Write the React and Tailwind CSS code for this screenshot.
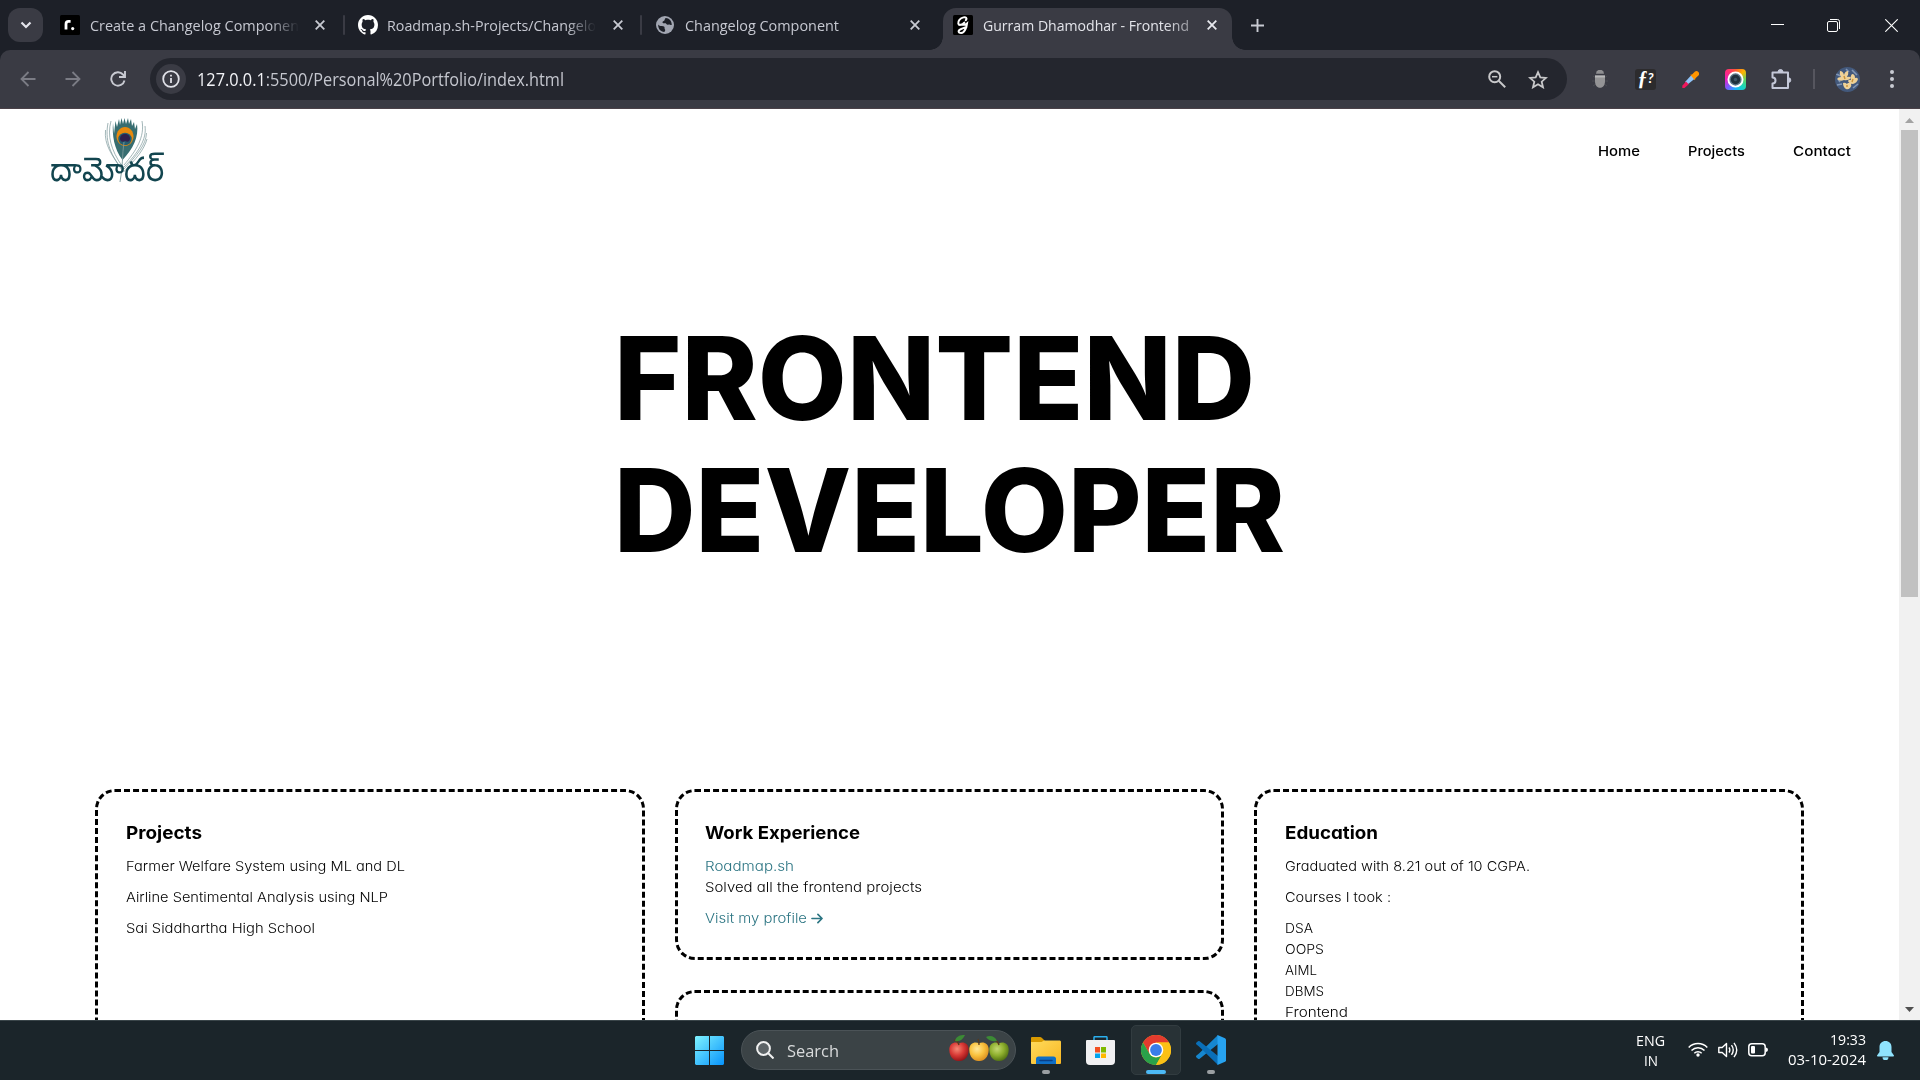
import React, { useLayoutEffect, useRef, useState } from "react";

/* Text stretched horizontally to an exact width, measured once mounted. */
function Fit({ w, className = "", children }) {
  const ref = useRef(null);
  const [scale, setScale] = useState(1);
  useLayoutEffect(() => {
    const natural = ref.current.offsetWidth;
    if (natural) setScale(w / ref.current.getBoundingClientRect().width);
  }, [w]);
  return (
    <span className={`block overflow-visible whitespace-nowrap ${className}`} style={{ width: w }}>
      <span ref={ref} className="inline-block origin-left" style={{ transform: scale === 1 ? undefined : `scaleX(${scale})` }}>
        {children}
      </span>
    </span>
  );
}

const Close = ({ className = "text-[#c8cad2]" }) => (
  <svg viewBox="0 0 10 10" className={`size-[10px] shrink-0 ${className}`} fill="none" stroke="currentColor" strokeWidth="1.8">
    <path d="M.7.7l8.6 8.6M9.3.7L.7 9.3" />
  </svg>
);

const fade = "[mask-image:linear-gradient(to_right,#000_86%,transparent_100%)]";

function TabStrip() {
  return (
    <div className="flex h-[50px] items-start bg-[#1d2028] text-[15px] text-[#c6c8d1] font-['Open_Sans','Noto_Sans',sans-serif]">
      <div className="ml-2 mt-2 flex h-[34px] w-[35px] shrink-0 items-center justify-center rounded-[12px] bg-[#3a3b44]">
        <svg viewBox="0 0 12 8" className="h-[8px] w-[12px]" fill="none" stroke="#e4e5ec" strokeWidth="2.2"><path d="M1.5 1.5L6 6l4.500-4.500" /></svg>
      </div>
      <div className="flex h-[50px] w-[302px] shrink-0 items-center pl-[17px]">
        <svg viewBox="0 0 20 20" className="size-5 shrink-0">
          <rect width="20" height="20" rx="1.5" fill="#000" />
          <path d="M6 14.5V9.2Q6 6.4 8.6 6.4H10.6" fill="none" stroke="#fff" strokeWidth="2.8" />
          <circle cx="12.7" cy="13.6" r="1.6" fill="#fff" />
        </svg>
        <Fit w={209} className={`ml-[10px] ${fade}`}>Create a Changelog Componen</Fit>
        <Close className="ml-[16px] text-[#c8cad2]" />
        <span className="ml-auto h-5 w-[2px] rounded bg-[#3a3b44]" />
      </div>
      <div className="flex h-[50px] w-[297px] shrink-0 items-center pl-[13px]">
        <svg viewBox="0 0 16 16" className="size-5 shrink-0" fill="#fff">
          <path d="M8 0C3.58 0 0 3.58 0 8c0 3.54 2.29 6.53 5.47 7.59.4.07.55-.17.55-.38 0-.19-.01-.82-.01-1.49-2.01.37-2.53-.49-2.69-.94-.09-.23-.48-.94-.82-1.13-.28-.15-.68-.52-.01-.53.63-.01 1.08.58 1.23.82.72 1.21 1.87.87 2.33.66.07-.52.28-.87.51-1.07-1.78-.2-3.64-.89-3.64-3.95 0-.87.31-1.59.82-2.15-.08-.2-.36-1.02.08-2.12 0 0 .67-.21 2.2.82.64-.18 1.32-.27 2-.27s1.36.09 2 .27c1.53-1.04 2.2-.82 2.2-.82.44 1.1.16 1.92.08 2.12.51.56.82 1.27.82 2.15 0 3.07-1.87 3.75-3.65 3.95.29.25.54.73.54 1.48 0 1.07-.01 1.93-.01 2.2 0 .21.15.46.55.38A8.01 8.01 0 0016 8c0-4.42-3.58-8-8-8z" />
        </svg>
        <Fit w={209} className={`ml-[9px] ${fade}`}>Roadmap.sh-Projects/Changelo</Fit>
        <Close className="ml-[17px] text-[#c8cad2]" />
        <span className="ml-auto h-5 w-[2px] rounded bg-[#3a3b44]" />
      </div>
      <div className="flex h-[50px] w-[301px] shrink-0 items-center pl-[14px]">
        <svg viewBox="0 0 20 20" className="size-[18px] shrink-0">
          <circle cx="10" cy="10" r="10" fill="#a2a6b2" />
          <path d="M2.500 9.500C3.500 11.500 6 11 8 11.500c2.500.5 1 2.500 2 3.500.8.800-.3 2-.8 2.800C5 17.500 2 14 2.500 9.500zM11 2.300C9 3 10.500 5 8.500 5.600 7 6 6.800 7.500 8 8c1.500.6 2.500-.6 3.300.5.6 1 1.500 1.500 2.700 1 1.200-.4 1.700.8 3.500.6C17.700 5.500 14.500 2.500 11 2.300z" fill="#1d2028" />
        </svg>
        <Fit w={154} className="ml-[11px]">Changelog Component</Fit>
        <Close className="ml-[71px] text-[#c8cad2]" />
      </div>
      <div className="relative mt-2 flex h-[42px] w-[289px] shrink-0 items-center rounded-t-[13px] bg-[#3a3b44] pb-2 pl-[10px] text-[#e3e4ea]">
        <span className="absolute bottom-0 -left-[13px] size-[13px] bg-[radial-gradient(circle_at_0_0,transparent_12.500px,#3a3b44_13px)]" />
        <span className="absolute bottom-0 -right-[13px] size-[13px] bg-[radial-gradient(circle_at_100%_0,transparent_12.500px,#3a3b44_13px)]" />
        <svg viewBox="0 0 20 20" className="size-5 shrink-0">
          <rect width="20" height="20" rx="1.500" fill="#000" />
          <path d="M12.800 5.200C14.500 3.500 13 1.800 10.500 2.400 7 3.200 4.800 6 5.300 8.500c.5 2.300 4 1.500 6-1M8.500 9.500c2 .6 4 .3 5.500-1C13.500 12 12.500 15 10.500 17c-2 1.800-5.500 1-4.800-1.200C6.500 14 10 13.500 13.500 12" fill="none" stroke="#fff" strokeWidth="2" strokeLinecap="round" />
        </svg>
        <Fit w={206} className="ml-[10px] [mask-image:linear-gradient(to_right,#000_88%,#0008_100%)]">Gurram Dhamodhar - Frontend</Fit>
        <Close className="ml-[18px] text-[#e8e9ef]" />
      </div>
      <div className="flex h-[50px] flex-1 items-center">
        <svg viewBox="0 0 13 13" className="ml-[19px] mt-[0px] size-[13px]" stroke="#c8cad2" strokeWidth="1.900"><path d="M6.500 0v13M0 6.500h13" /></svg>
        <svg viewBox="0 0 13 13" className="ml-auto size-[13px]" stroke="#fff" strokeWidth="1"><path d="M0 5.500h13" /></svg>
        <svg viewBox="0 0 13 13" className="ml-[43px] size-[13px]" fill="none" stroke="#fff" strokeWidth="1">
          <rect x=".5" y="2.500" width="10" height="10" rx="1.500" /><path d="M3 .5h7.500q2 0 2 2V10" />
        </svg>
        <svg viewBox="0 0 13 13" className="ml-[45px] mr-[22px] size-[13px]" stroke="#fff" strokeWidth="1.100"><path d="M.3.3l12.400 12.400M12.700.3L.3 12.700" /></svg>
      </div>
    </div>
  );
}

const Slot = ({ className, children }) => <div className={`flex shrink-0 items-center justify-center ${className}`}>{children}</div>;

function Toolbar() {
  return (
    <div className="bg-[#1d2028]">
      <div className="flex h-[59px] items-center rounded-t-[10px] border-b border-[#4a4148] bg-[#3a3b44] font-['Open_Sans','Noto_Sans',sans-serif]">
        <Slot className="ml-[5px] w-[45px]">
          <svg viewBox="0 0 16 16" className="size-4" fill="none" stroke="#7b7c85" strokeWidth="1.800"><path d="M15.500 8H1.500M8.500 1L1.500 8l7 7" /></svg>
        </Slot>
        <Slot className="w-[45px]">
          <svg viewBox="0 0 16 16" className="size-4" fill="none" stroke="#7b7c85" strokeWidth="1.800"><path d="M.5 8h14M7.500 1l7 7-7 7" /></svg>
        </Slot>
        <Slot className="w-[45px]">
          <svg viewBox="0 0 16 16" className="size-4" fill="none" stroke="#c8cad2" strokeWidth="1.900"><path d="M14.500 9.500A6.700 6.700 0 1 1 13 3.500L14.500 5" /><path d="M15 0v6H9" /></svg>
        </Slot>
        <div className="ml-[10px] flex h-[42px] w-[1417px] shrink-0 items-center rounded-full bg-[#24262e]">
          <span className="ml-[6px] flex size-[30px] items-center justify-center rounded-full bg-[#3a3b44]">
            <svg viewBox="0 0 18 18" className="size-[18px]" fill="none" stroke="#e0e1e8" strokeWidth="1.800"><circle cx="9" cy="9" r="7.800" /><path d="M9 8v5M9 4.700v1.900" /></svg>
          </span>
          <Fit w={367} className="ml-[11px] text-[17.500px] text-[#c4c6ce]"><span className="text-[#f2f3f7]">127.0.0.1</span>:5500/Personal%20Portfolio/index.html</Fit>
          <svg viewBox="0 0 18 18" className="ml-auto size-[18px]" fill="none" stroke="#c8c8ca" strokeWidth="2"><circle cx="6.700" cy="6.700" r="5.500" /><path d="M10.700 10.700l6.500 6.500" /><path d="M4 6.700h5.400" strokeWidth="1.500" /></svg>
          <svg viewBox="0 0 20 19" className="ml-[22px] mr-[19px] h-[19px] w-[20px]" fill="none" stroke="#c8c8ca" strokeWidth="1.800"><path d="M10 2.200l2.300 5.200 5.700.5-4.300 3.800 1.300 5.600-5-3-5 3 1.300-5.600L2 7.900l5.700-.5z" /></svg>
        </div>
        <div className="ml-[10px] flex items-center">
          <Slot className="w-[46px]">
            <svg viewBox="0 0 16 18" className="h-[18px] w-4">
              <path d="M1 6l3 2M0 11h4M1 16l3-2M15 6l-3 2M16 11h-4M15 16l-3-2" stroke="#4b4c53" />
              <path d="M4 3.800a4 4 0 0 1 8 0z" fill="#8f8f92" /><path d="M3 5.500h10V11c0 4-2 6.800-5 6.800S3 15 3 11z" fill="#949496" /><path d="M3 5.500h10v2H3z" fill="#b7b7b9" />
            </svg>
          </Slot>
          <Slot className="w-[45px]">
            <span className="flex size-[21px] items-center justify-center rounded-[3px] bg-[#2c2b2d] pb-[3px] font-['Liberation_Serif',serif] text-[20px] leading-none font-bold text-white italic">ƒ<span className="font-['Lato',sans-serif] text-[14px]">?</span></span>
          </Slot>
          <Slot className="w-[45px]">
            <svg viewBox="0 0 17 17" className="size-[17px]">
              <path d="M9.500 4l3.500 3.500-7.500 6L3 11z" fill="#90c4f8" /><path d="M4 10.500l2.700 2.700L2.500 17H.3v-2.200z" fill="#f0165c" />
              <path d="M8.200 3.800L10 3.500 13 .4q2-.9 3.400.6t.3 3.200l-3.200 3-.6 2z" fill="#ff9500" />
            </svg>
          </Slot>
          <Slot className="w-[45px]">
            <span className="flex size-[21px] items-center justify-center rounded-[4px] bg-[conic-gradient(from_0deg,#ff5a36,#ffb300,#5fd35c,#18d6c0,#18b4ff,#7a5cff,#e91ec0,#ff2d78,#ff5a36)]">
              <svg viewBox="0 0 18 18" className="size-[17px]"><circle cx="9" cy="9" r="7.500" fill="#5b7486" stroke="#fff" strokeWidth="2" /><circle cx="9" cy="9" r="5" fill="#1f313d" /><circle cx="9" cy="9" r="1.800" fill="#3c5364" /></svg>
            </span>
          </Slot>
          <Slot className="w-[45px] pl-[2px]">
            <svg viewBox="0 0 21 21" className="size-[21px]" fill="none" stroke="#c4c8d8" strokeWidth="2">
              <path d="M1.500 3.500H17v15.500H1.500v-4.500a3 3 0 0 0 0-6z" strokeLinejoin="round" /><path d="M7 3a2.500 2.500 0 0 1 5 0zM17.500 8.800a2.300 2.300 0 0 1 0 4.600z" fill="#c4c8d8" strokeWidth="1" />
            </svg>
          </Slot>
          <Slot className="w-[22px]"><span className="h-5 w-[2px] bg-[#56565f]" /></Slot>
          <Slot className="w-[45px]">
            <svg viewBox="0 0 25 25" className="size-[25px] rounded-full">
              <rect width="25" height="25" fill="#43597c" />
              <path d="M1 7l5 2M17 3l5 5M2 18l5-1M18 21l5-4M3 12l2 3M11 2l3 3" stroke="#8296b4" strokeWidth="1.600" />
              <path d="M5 4q3 0 4 4 1-4 4-4 1 3-1 6 3-1 4 1-3 3-7 2-4 2-7-1 1-2 4-2-2-3-1-6zM17 7q3 0 3 4 2-1 3 1-1 4-5 5-4 0-5-3 1-2 3-1-1-4 1-6zM8 16q2-1 4 1 1-2 4-1 1 3-1 5-2 2-4 1-3-2-3-6z" fill="#efd297" />
              <path d="M9 9l1 3M18 12l-1 3M12 18v2" stroke="#c99238" strokeWidth="1.400" />
            </svg>
          </Slot>
          <Slot className="w-[44px]">
            <svg viewBox="0 0 4 18" className="h-[18px] w-1" fill="#c8cad2"><circle cx="2" cy="2" r="2" /><circle cx="2" cy="9" r="2" /><circle cx="2" cy="16" r="2" /></svg>
          </Slot>
        </div>
      </div>
    </div>
  );
}

function Feather() {
  return (
    <svg viewBox="0 0 44 66" className="absolute top-0 left-[54px] h-[66px] w-[44px]" fill="none">
      <path d="M4 6C1 22 5 36 18 52M1.500 13C0 28 8 38 18.500 54M7 4C3 19 7 33 18 49M38 4C41 20 32 34 20 48M41 9C43 22 34 36 20 50M42.500 16C42 28 33 38 20 52M43 22C40 33 32 42 19.500 55" stroke="#7a979a" strokeWidth=".7" />
      <path d="M9 6l1 11 1.500-13 1.500 6 2-8 1 6 1.500-7 1.500 6 1.500-6 1.500 6 2-6 1 6 2-5 1 7 2-4 1 7 2-5C35 20 29 32 18.500 43 10 32 8 18 9 6z" fill="#376d70" />
      <path d="M21 10c5 0 8.500 4.500 8.500 9.500s-4 9.500-8.500 9.500-8.500-4.500-8.500-9.500 3.500-9.500 8.500-9.500z" fill="#e8890d" />
      <ellipse cx="21" cy="22" rx="6.700" ry="6.200" fill="#245d70" /><path d="M21 17c3 0 5 2 5 4.500S24 26 21 24c-3 2-5 0-5-2.500s2-4.500 5-4.500z" fill="#30204d" />
      <path d="M20 25C18 38 19 50 16 65" stroke="#7a979a" strokeWidth=".9" />
    </svg>
  );
}

function Card({ title, w, className = "", children }) {
  return (
    <section className={`rounded-[20px] border-[3px] border-dashed border-black px-[27.500px] pt-[27px] ${className}`}>
      {title && <h2 className="mb-[10px] text-[17.500px] leading-[27px] font-[650]"><Fit w={w}>{title}</Fit></h2>}
      {children}
    </section>
  );
}

const poppinsLike = "font-['Inter','Open_Sans',sans-serif] [font-feature-settings:'cv11']";

function Page() {
  return (
    <div className="flex h-[911px] overflow-hidden bg-white">
      <main className={`h-[911px] w-[1899px] overflow-hidden text-black ${poppinsLike}`}>
        <header className="flex h-[84px] items-center justify-between pr-[48px] pl-[50px]">
          <div className="relative h-[68px] w-[116px]">
            <Feather />
            <Fit w={114} className="relative pt-[32px] text-[34px] leading-[40px] font-light text-[#12454f]">దామోదర్</Fit>
          </div>
          <nav className="flex gap-[48px] text-[13.500px] leading-5 font-medium">
            <Fit w={42}>Home</Fit>
            <Fit w={57}>Projects</Fit>
            <Fit w={58}>Contact</Fit>
          </nav>
        </header>
        <h1 className="mt-[119px] ml-[614px] text-[115.500px] leading-[132px] font-[760]">
          <Fit w={641}>FRONTEND</Fit>
          <Fit w={671}>DEVELOPER</Fit>
        </h1>
        <div className="mt-[213px] ml-[95px] grid w-[1709px] grid-cols-3 gap-[30px] text-[13.500px] leading-[21px] font-[360]">
          <Card title="Projects" w={76} className="row-span-2 h-[400px]">
            <div className="flex flex-col gap-[10px]">
              <Fit w={279}>Farmer Welfare System using ML and DL</Fit>
              <Fit w={262}>Airline Sentimental Analysis using NLP</Fit>
              <Fit w={189}>Sai Siddhartha High School</Fit>
            </div>
          </Card>
          <Card title="Work Experience" w={155} className="h-[171px]">
            <Fit w={89} className="text-[#2c7583]">Roadmap.sh</Fit>
            <Fit w={217}>Solved all the frontend projects</Fit>
            <div className="mt-[10px] flex items-center text-[#2c7583]">
              <Fit w={102}>Visit my profile</Fit>
              <svg viewBox="0 0 13 12" className="ml-[4px] h-[11px] w-[12px]" fill="none" stroke="currentColor" strokeWidth="1.800" strokeLinecap="round" strokeLinejoin="round"><path d="M1 6h11M7.500 1.500L12 6l-4.500 4.500" /></svg>
            </div>
          </Card>
          <Card title="Education" w={93} className="row-span-2 h-[400px]">
            <div className="flex flex-col gap-[10px]">
              <Fit w={245}>Graduated with 8.21 out of 10 CGPA.</Fit>
              <Fit w={106}>Courses I took :</Fit>
              <div>
                <Fit w={28}>DSA</Fit>
                <Fit w={39}>OOPS</Fit>
                <Fit w={32}>AIML</Fit>
                <Fit w={39}>DBMS</Fit>
                <Fit w={63}>Frontend</Fit>
              </div>
            </div>
          </Card>
          <Card className="h-[199px]" />
        </div>
      </main>
      <aside className="flex h-[911px] w-[21px] flex-col items-center bg-[#f1f1f1]">
        <svg viewBox="0 0 9 5" className="mt-[9px] h-[5px] w-[9px]" fill="#a3a3a3"><path d="M0 5L4.500 0 9 5z" /></svg>
        <div className="mt-[7px] h-[467px] w-[17px] bg-[#c1c1c1]" />
        <svg viewBox="0 0 9 5" className="mt-auto mb-[8px] h-[5px] w-[9px]" fill="#505050"><path d="M0 0L4.500 5 9 0z" /></svg>
      </aside>
    </div>
  );
}

const Apple = ({ id, hi, mid, lo, leaf }) => (
  <svg viewBox="0 0 20 28" className="h-[28px] w-[20px] overflow-visible">
    <defs><radialGradient id={id} cx=".4" cy=".35" r=".7"><stop offset="0" stopColor={hi} /><stop offset=".5" stopColor={mid} /><stop offset="1" stopColor={lo} /></radialGradient></defs>
    <path d="M10 8.500C13 6 20 7.500 19.700 15 19.500 22 15 26.500 10 26 5 26.500.5 22 .3 15 0 7.500 7 6 10 8.500z" fill={`url(#${id})`} />
    <path d={leaf ? "M10 10Q9 6 5 5" : "M10 10Q10 6 9 4"} stroke="#5b3a1c" strokeWidth="1.300" fill="none" />
    {leaf && <path d={leaf} fill="#3c8a35" />}
  </svg>
);

function Taskbar() {
  return (
    <footer className="flex h-[60px] items-start border-t border-[#3a4549] bg-[#1b252a] font-['Open_Sans','Noto_Sans',sans-serif] text-white">
      <svg viewBox="0 0 29 29" className="mt-[15px] ml-[695px] size-[29px] shrink-0">
        <defs><linearGradient id="win" x2="1" y2="1" gradientUnits="userSpaceOnUse" x1="0" y1="0" gradientTransform="scale(29)"><stop stopColor="#7ff3ff" /><stop offset="1" stopColor="#0793fb" /></linearGradient></defs>
        <path d="M1 0h13v14H0V1zM15 0h13l1 1v13H15zM0 15h14v14H1l-1-1zM15 15h14v13l-1 1H15z" fill="url(#win)" />
      </svg>
      <div className="mt-[9px] ml-[17px] flex h-[40px] w-[275px] shrink-0 items-center rounded-full border border-[#4b5357] bg-[#3b4346]">
        <svg viewBox="0 0 18 18" className="ml-[14px] size-[18px]" fill="#5d6467" stroke="#f0f1f1" strokeWidth="2"><circle cx="7.500" cy="7.500" r="6.400" /><path d="M12 12l5.500 5.500" /></svg>
        <Fit w={52} className="mt-[1px] ml-[13px] text-[17px] text-[#d9dbdc]">Search</Fit>
        <div className="mb-[2px] ml-auto mr-[6px] flex">
          <Apple id="a1" hi="#f58a76" mid="#d93a36" lo="#8c0f14" leaf="M6 6C7 1 11 0 16 0 14 4 11 7 6 6z" />
          <Apple id="a2" hi="#ffe79a" mid="#fac33f" lo="#d98a1c" />
          <Apple id="a3" hi="#c4d873" mid="#8fb02e" lo="#4b6a10" leaf="M-3 2C1 0 6 1 8 6 4 7 0 6-3 2z" />
        </div>
      </div>
      <div className="ml-[15px] flex w-[30px] shrink-0 flex-col items-center">
        <svg viewBox="0 0 30 28" className="mt-[16px] h-[28px] w-[30px]">
          <defs><linearGradient id="fold" x2="1" y2="1"><stop stopColor="#ffdb5c" /><stop offset="1" stopColor="#f9b722" /></linearGradient></defs>
          <path d="M0 1q0-1 1-1h8q1 0 2 1l3 3v3H0z" fill="#d99a00" /><path d="M0 5h10.500L13 3.500h16l1 1v21.500q0 1-1 1H1q-1 0-1-1z" fill="url(#fold)" />
          <path d="M5 27v-5q0-2.500 2.500-2.500h15q2.500 0 2.500 2.500v5z" fill="#0f6fc6" /><path d="M9 23.500h12" stroke="#0a3f86" strokeWidth="1.500" strokeLinecap="round" />
        </svg>
        <span className="mt-[5px] h-[4px] w-[8px] rounded-full bg-[#9a9fa2]" />
      </div>
      <svg viewBox="0 0 29 29" className="mt-[15px] ml-[25px] size-[29px] shrink-0">
        <path d="M8 5V1.500q0-.8.800-.8h11.400q.8 0 .8.800V5" fill="none" stroke="#2bb0ee" strokeWidth="1.500" />
        <path d="M0 5q0-1 1-1h27q1 0 1 1v20q0 4-4 4H4q-4 0-4-4z" fill="#f1f1f2" />
        <path d="M9 11h5v5.500H9z" fill="#f25022" /><path d="M15 11h5v5.500h-5z" fill="#7fba00" /><path d="M9 17.500h5V22H9z" fill="#00a4ef" /><path d="M15 17.500h5V22h-5z" fill="#ffb900" />
      </svg>
      <div className="mt-[4px] ml-[16px] flex h-[50px] w-[50px] shrink-0 flex-col items-center rounded-[5px] border border-[#323c40] bg-[#283236]">
        <svg viewBox="0 0 30 30" className="mt-[9px] size-[30px]">
          <circle cx="15" cy="15" r="15" fill="#fbc116" />
          <path d="M2 7.500A15 15 0 0 1 28 7.500H15L8.500 18.700z" fill="#e33b2e" />
          <path d="M2 7.500L8.500 18.700Q11 22.500 15 22.500q3 0 5.500-2L15 30A15 15 0 0 1 2 7.500z" fill="#2aa14a" />
          <path d="M28 7.500H15A7.500 7.500 0 0 1 21.500 18.700L15 30A15 15 0 0 0 28 7.500z" fill="#fbc116" />
          <circle cx="15" cy="15" r="7.300" fill="#fff" /><circle cx="15" cy="15" r="5.900" fill="#3a7dea" />
        </svg>
        <span className="mt-[5px] h-[4px] w-[20px] shrink-0 rounded-full bg-[#4cb9f5]" />
      </div>
      <div className="ml-[15px] flex w-[30px] shrink-0 flex-col items-center">
        <svg viewBox="0 0 30 30" className="mt-[14px] size-[30px]">
          <path d="M22 0L3 18.500.5 20.500q-1 1 0 2l1.500 1.300q.8.600 1.700 0L22 9z" fill="#1687cf" />
          <path d="M22 30L3 11.500.5 9.500q-1-1 0-2L2 6.200q.8-.6 1.700 0L22 21z" fill="#0a6fb8" />
          <path d="M21.500 0L29 3.300q1 .5 1 1.500v20.400q0 1-1 1.500L21.500 30z" fill="#27a3f0" />
        </svg>
        <span className="mt-[5px] h-[4px] w-[8px] rounded-full bg-[#9a9fa2]" />
      </div>
      <div className="mt-[9px] mr-[1px] ml-auto flex flex-col items-center text-[15px] leading-[20px]">
        <Fit w={29}>ENG</Fit>
        <Fit w={14}>IN</Fit>
      </div>
      <svg viewBox="0 0 20 15" className="mt-[21px] ml-[22px] h-[15px] w-[20px]" fill="none" stroke="#fff" strokeWidth="1.500">
        <path d="M.7 5.500a13 13 0 0 1 18.600 0M3.500 8.500a9 9 0 0 1 13 0M6.300 11.300a5.200 5.200 0 0 1 7.400 0" /><circle cx="10" cy="13" r="1.700" fill="#fff" stroke="none" />
      </svg>
      <svg viewBox="0 0 20 18" className="mt-[20px] ml-[10px] h-[18px] w-[20px]" fill="none" stroke="#fff" strokeWidth="1.400">
        <path d="M.8 6.500v5h3.400L8.500 15.500v-13L4.200 6.500zM11 6.500q1.700 2.500 0 5M13.500 4.200q3.500 4.800 0 9.600M16 1.800q5.500 7.200 0 14.400" strokeLinejoin="round" />
      </svg>
      <svg viewBox="0 0 20 14" className="mt-[22px] ml-[10px] h-[14px] w-[20px]">
        <rect x=".8" y=".8" width="16.400" height="12" rx="3" fill="none" stroke="#fff" strokeWidth="1.500" /><rect x="3" y="3" width="4" height="7.600" rx="1" fill="#fff" /><path d="M18 4.500q2 .3 2 2.300t-2 2.300z" fill="#fff" />
      </svg>
      <div className="mt-[8px] ml-[20px] flex flex-col items-end text-[15px] leading-[20px]">
        <Fit w={36}>19:33</Fit>
        <Fit w={78}>03-10-2024</Fit>
      </div>
      <svg viewBox="0 0 17 19" className="mt-[20px] mr-[26px] ml-[11px] h-[19px] w-[17px]" fill="#8fe3fd">
        <path d="M8.500 0C12 0 14.500 2.500 14.500 6v5L17 14.500q0 .9-.8.900H.8q-.8 0-.8-.9L2.500 11V6C2.500 2.500 5 0 8.500 0zM5.500 16.300h6a3 3 0 0 1-6 0z" />
      </svg>
    </footer>
  );
}

export default function App() {
  return (
    <div className="h-[1080px] w-[1920px] overflow-hidden">
      <TabStrip />
      <Toolbar />
      <Page />
      <Taskbar />
    </div>
  );
}
